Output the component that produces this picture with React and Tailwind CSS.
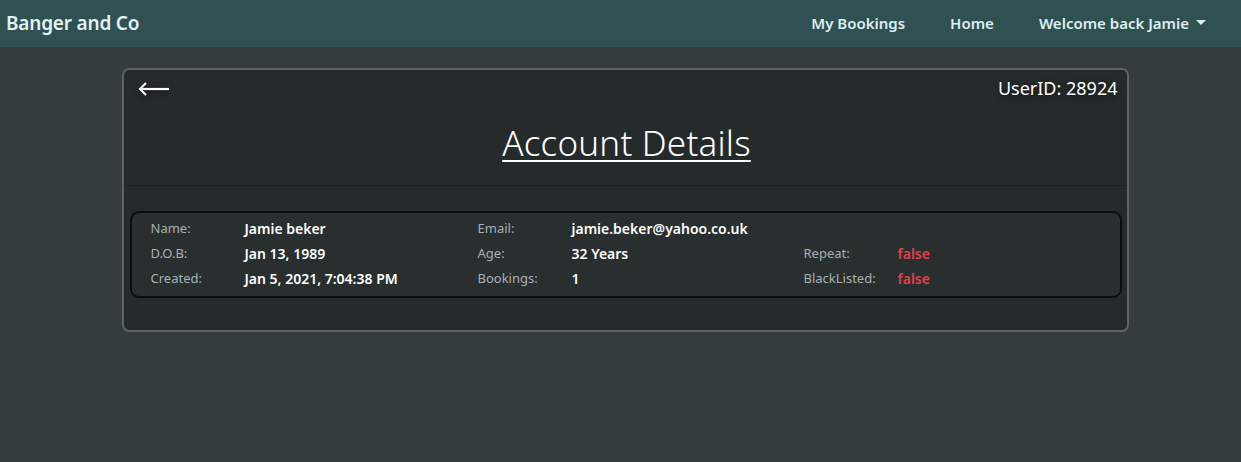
import React from 'react'

const font = { fontFamily: '"Noto Sans", "Open Sans", sans-serif' }

function Field({ label, value, red }) {
  return (
    <div className="flex items-center h-[25px]">
      <span className="w-[94px] text-[13px] text-[#a9b0b4]">{label}</span>
      <span className={red ? 'text-[14px] font-semibold text-[#e0414f]' : 'text-[14px] font-semibold text-white'}>{value}</span>
    </div>
  )
}

export default function App() {
  return (
    <div className="min-h-[462px] bg-[#353c3e] text-white" style={font}>
      <nav className="h-[47px] bg-[#2f5152] flex items-center pl-[6px] pr-[35px]">
        <span className="text-[19px] font-semibold text-[#e6f2f4] tracking-[-0.2px]">Banger and Co</span>
        <div className="ml-auto flex items-center gap-[45px] text-[15px] font-semibold text-[#dfeef0]">
          <span>My Bookings</span>
          <span>Home</span>
          <span className="flex items-center gap-[7px]">
            Welcome back Jamie
            <span className="w-0 h-0 border-l-[5px] border-r-[5px] border-t-[5px] border-l-transparent border-r-transparent border-t-[#dfeef0] mb-[2px]" />
          </span>
        </div>
      </nav>

      <div className="pt-[21px] flex justify-center">
        <div className="w-[1007px] ml-[9px] border-2 border-[#5d6264] rounded-[7px] bg-[#252a2b] overflow-hidden">
          <div className="h-[116px] border-b border-[#1f2324] px-[14px] pt-[5px] relative">
            <div className="flex items-center justify-between">
              <svg width="32" height="20" viewBox="0 0 32 20" className="drop-shadow-[0_2px_4px_rgba(0,0,0,0.6)]">
                <line x1="2" y1="10" x2="31" y2="10" stroke="white" strokeWidth="2.2" />
                <polyline points="8,4 2,10 8,16" fill="none" stroke="white" strokeWidth="2.2" />
              </svg>
              <span className="text-[18px] text-white [text-shadow:0_2px_6px_rgba(0,0,0,0.6)] -mr-[5px]">UserID: 28924</span>
            </div>
            <h1 className="text-center text-[35px] font-light underline underline-offset-[4px] decoration-[2px] mt-[15px] ml-[3px] tracking-[0.2px]">Account Details</h1>
          </div>
          <div className="pl-[6px] pr-[5px] pt-[25px] pb-[32px]">
            <div className="border-2 border-[#0a0c0d] rounded-[9px] bg-[#292e2f] pl-[19px] pt-[3px] pb-[5px] grid grid-cols-[327px_326px_1fr]">
              <div>
                <Field label="Name:" value="Jamie beker" />
                <Field label="D.O.B:" value="Jan 13, 1989" />
                <Field label="Created:" value="Jan 5, 2021, 7:04:38 PM" />
              </div>
              <div>
                <Field label="Email:" value="jamie.beker@yahoo.co.uk" />
                <Field label="Age:" value="32 Years" />
                <Field label="Bookings:" value="1" />
              </div>
              <div>
                <div className="h-[25px]" />
                <Field label="Repeat:" value="false" red />
                <Field label="BlackListed:" value="false" red />
              </div>
            </div>
          </div>
        </div>
      </div>
    </div>
  )
}
